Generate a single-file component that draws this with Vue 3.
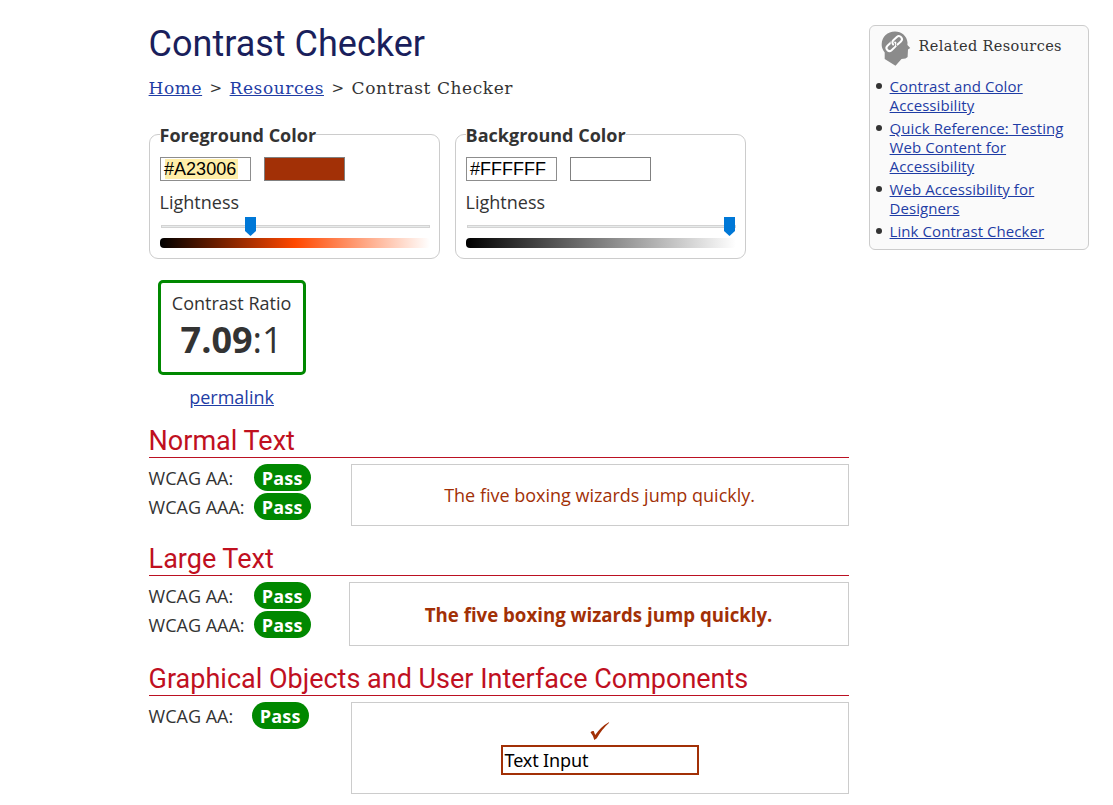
<script setup>
const pickers = [
  { title: 'Foreground Color', value: '#A23006', kind: 'fg', thumb: 85 },
  { title: 'Background Color', value: '#FFFFFF', kind: 'bg', thumb: 258 },
]
const links = [
  ['Contrast and Color', 'Accessibility'],
  ['Quick Reference: Testing', 'Web Content for', 'Accessibility'],
  ['Web Accessibility for', 'Designers'],
  ['Link Contrast Checker'],
]
</script>

<template>
  <div class="page">
    <main class="main">
      <h1>Contrast Checker</h1>
      <nav class="crumbs">
        <a class="c1">Home</a><span class="sep">&gt;</span><a class="c2">Resources</a><span class="sep">&gt;</span><span class="c3">Contrast Checker</span>
      </nav>

      <div class="pickers">
        <fieldset v-for="p in pickers" :key="p.kind" :class="p.kind">
          <legend>{{ p.title }}</legend>
          <div class="inputs">
            <div class="hex"><span>{{ p.value }}</span></div>
            <div class="swatch"></div>
          </div>
          <div class="label">Lightness</div>
          <div class="slider">
            <div class="track"></div>
            <svg class="thumb" :style="{ left: p.thumb + 'px' }" width="11" height="19" viewBox="0 0 11 19"><path d="M0 0H11V14L5.5 19L0 14Z" fill="#0078d7" /></svg>
          </div>
          <div class="gradient"></div>
        </fieldset>
      </div>

      <div class="result">
        <div class="ratio">
          <div class="ratio-label">Contrast Ratio</div>
          <div class="ratio-value"><b>7.09</b>:1</div>
        </div>
        <a class="permalink">permalink</a>
      </div>

      <section class="normal">
        <h2>Normal Text</h2>
        <div class="body">
          <div class="levels">
            <div class="level"><span>WCAG AA:</span><b>Pass</b></div>
            <div class="level"><span>WCAG AAA:</span><b>Pass</b></div>
          </div>
          <div class="sample">The five boxing wizards jump quickly.</div>
        </div>
      </section>

      <section class="large">
        <h2>Large Text</h2>
        <div class="body">
          <div class="levels">
            <div class="level"><span>WCAG AA:</span><b>Pass</b></div>
            <div class="level"><span>WCAG AAA:</span><b>Pass</b></div>
          </div>
          <div class="sample">The five boxing wizards jump quickly.</div>
        </div>
      </section>

      <section class="graphical">
        <h2>Graphical Objects and User Interface Components</h2>
        <div class="body">
          <div class="levels">
            <div class="level"><span>WCAG AA:</span><b>Pass</b></div>
          </div>
          <div class="sample">
            <svg class="check" width="20" height="18" viewBox="0 0 20 18"><path d="M0.5 10.2Q2.2 8.6 3.7 9L5.2 13Q11 4.5 18.8 .2L19.2 .7Q12 7 6.8 16.2L4.3 18Q3.3 13.5 .5 10.2Z" fill="#a23006" /></svg>
            <div class="text-input">Text Input</div>
          </div>
        </div>
      </section>
    </main>

    <aside class="related">
      <div class="related-head">
        <svg class="head-icon" width="30" height="36" viewBox="0 0 30 36">
          <path d="M14 .5C20.5 .5 26 5 26.5 11.5L26.4 14L29.2 17L27 18.5L26.6 26L24.5 27.5L20.5 28L14.5 34.8L3.7 28V21.5C1.3 18.5 .5 15.5 .7 13C1 5.5 6.5 .5 14 .5Z" fill="#8b8b8b" />
          <g transform="translate(13.2 12.6) rotate(-43)" fill="none" stroke-linecap="round">
            <rect x="-9.4" y="-3" width="10.8" height="6" rx="3" stroke="#fff" stroke-width="2" />
            <path d="M1.8 3H6.4A3 3 0 0 0 6.4 -3H1.6A3 3 0 0 0 -1.4 0" stroke="#8b8b8b" stroke-width="3.6" />
            <path d="M1.8 3H6.4A3 3 0 0 0 6.4 -3H1.6A3 3 0 0 0 -1.4 0" stroke="#fff" stroke-width="2" />
          </g>
        </svg>
        <span>Related Resources</span>
      </div>
      <ul>
        <li v-for="link in links" :key="link[0]">
          <a><template v-for="(line, i) in link" :key="line"><br v-if="i" />{{ line }}</template></a>
        </li>
      </ul>
    </aside>
  </div>
</template>

<style>
body { background: #fff; }
</style>

<style scoped>
* { box-sizing: border-box; }
.page {
  display: flex;
  align-items: flex-start;
  gap: 20px;
  width: 1113px;
  height: 805px;
  overflow: hidden;
  padding-left: 148.6px;
  font: 18px/28px "Open Sans", sans-serif;
  color: #333;
}
.main { width: 700px; flex: none; }
a { color: #1f3da5; text-decoration: underline; white-space: nowrap; }
h1 {
  margin: 23px 0 0;
  font: 400 36px/42px Roboto, sans-serif;
  color: #1a1f5c;
}
.crumbs {
  display: flex;
  height: 24px;
  margin-top: 11px;
  font: 17px/25px "DejaVu Serif", serif;
  letter-spacing: 0.57px;
  white-space: nowrap;
}
.sep { width: 27px; text-align: center; font-size: 15px; }
.c1 { width: 54px; }
.c2 { width: 95px; }
.pickers { display: flex; gap: 15px; margin-top: 22px; }
fieldset {
  width: 291px;
  height: 137px;
  margin: 0;
  padding: 10px 9px 0 10px;
  min-width: 0;
  border: 1px solid #ccc;
  border-radius: 9px;
}
legend { padding: 0; height: 25px; line-height: 27px; font-weight: 700; white-space: nowrap; }
.inputs { display: flex; gap: 13px; }
.hex {
  width: 91px;
  height: 24px;
  border: 1px solid #8d8d8d;
  padding: 1px 4px;
  font: 18px/20px "Liberation Sans", sans-serif;
  color: #000;
}
.hex span { display: block; width: 73px; height: 20px; text-indent: -0.5px; }
.fg .hex span { background: #ffeea8; }
.swatch { width: 81px; height: 24px; border: 1px solid #808080; background: #fff; }
.fg .swatch { background: #a23006; }
.label { height: 28px; margin-top: 7px; line-height: 28px; }
.slider { position: relative; height: 22px; padding: 9px 0 0 1px; }
.track { width: 269px; height: 3px; border: 1px solid #d3d3d3; background: #e7eaea; }
.thumb { position: absolute; top: 1px; display: block; }
.gradient { width: 270px; height: 10px; border-radius: 4px; background: linear-gradient(to right, #000, #fff); }
.fg .gradient { background: linear-gradient(to right, #000, #ff4800 50%, #fff); }
.result { width: 148px; margin: 21px 0 0 9px; text-align: center; }
.ratio { height: 95px; border: 3px solid #080; border-radius: 5px; padding-top: 6px; white-space: nowrap; }
.ratio-label { line-height: 28px; }
.ratio-value { font-size: 36px; line-height: 46px; }
.permalink { display: block; height: 28px; margin-top: 8px; }
h2 {
  height: 33px;
  margin: 0;
  border-bottom: 1px solid #bb1122;
  font: 400 27px/32px Roboto, sans-serif;
  color: #c0101f;
  white-space: nowrap;
}
.normal { margin-top: 14px; height: 118px; }
.large { height: 120px; }
.body { display: flex; justify-content: space-between; padding-top: 6px; }
.level { display: flex; height: 29px; }
.level span { width: 105px; line-height: 29px; white-space: nowrap; }
.level b {
  width: 57px;
  height: 27px;
  border-radius: 14px;
  background: #080;
  color: #fff;
  text-align: center;
  line-height: 29px;
  letter-spacing: 0.2px;
}
.sample {
  width: 498px;
  height: 62px;
  border: 1px solid #ccc;
  color: #a23006;
  text-align: center;
  line-height: 61px;
  white-space: nowrap;
}
.large .sample { width: 500px; height: 64px; font-size: 18.67px; font-weight: 700; line-height: 63px; }
.graphical .level span { width: 103px; }
.graphical .sample { display: flex; flex-direction: column; align-items: center; height: 92px; padding-top: 19px; }
.check { display: block; }
.text-input {
  width: 198px;
  height: 30px;
  margin-top: 5px;
  border: 2px solid #a23006;
  padding-left: 2px;
  background: #fff;
  color: #000;
  font: 18px/27px "Noto Sans", sans-serif;
  letter-spacing: -0.15px;
  text-align: left;
}
.related {
  width: 220px;
  height: 225px;
  margin-top: 25px;
  border: 1px solid #ccc;
  border-radius: 6px;
  background: #fafafa;
  font-size: 15px;
  line-height: 19px;
  letter-spacing: 0.07px;
}
.related-head { display: flex; height: 51px; padding: 5px 0 0 11px; font: 14.5px/30px "DejaVu Serif", serif; letter-spacing: 0.36px; white-space: nowrap; }
.head-icon { flex: none; margin-right: 8px; }
ul { margin: 0; padding: 0 0 0 20px; list-style: none; }
li { margin-bottom: 4px; }
li::before { content: ""; float: left; width: 6px; height: 6px; margin: 6px 0 0 -14px; border-radius: 50%; background: #333; }
</style>
